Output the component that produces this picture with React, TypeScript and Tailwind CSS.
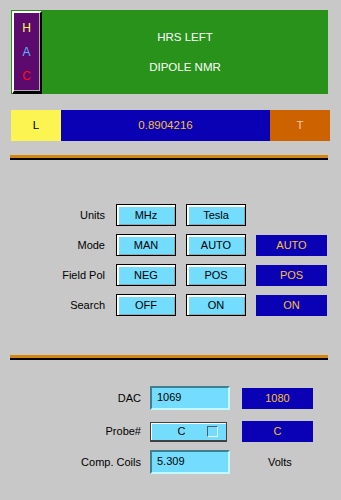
import React from 'react'

const font = { fontFamily: '"Liberation Sans", Arial, sans-serif' }

function Separator() {
  return (
    <div className="ml-[10px] w-[318px]">
      <div className="h-[3px] bg-[#d4850e]" />
      <div className="h-[2px] bg-black" />
    </div>
  )
}

function Btn({ label }: { label: string }) {
  return (
    <div className="w-[60px] h-[22px] border border-black bg-[#74dcfc] shadow-[inset_2px_2px_0_#ffffff,inset_-1px_-1px_0_#8aa8b0] flex items-center justify-center text-black">
      {label}
    </div>
  )
}

function Indicator({ value }: { value: string }) {
  return (
    <div className="w-[71px] h-[21px] bg-[#0a00b4] flex items-center justify-center text-[#f8c030]">
      {value}
    </div>
  )
}

function Input({ value }: { value: string }) {
  return (
    <div className="w-[80px] h-[24px] bg-[#74dcfc] border-t-2 border-l-2 border-t-[#3f7f8f] border-l-[#3f7f8f] border-b-2 border-r-2 border-b-[#c4f8ff] border-r-[#c4f8ff] pl-[5px] pt-[1px] text-black">
      {value}
    </div>
  )
}

export default function App() {
  const rows = [
    { label: 'Units', a: 'MHz', b: 'Tesla', ind: null },
    { label: 'Mode', a: 'MAN', b: 'AUTO', ind: 'AUTO' },
    { label: 'Field Pol', a: 'NEG', b: 'POS', ind: 'POS' },
    { label: 'Search', a: 'OFF', b: 'ON', ind: 'ON' },
  ]

  return (
    <div className="w-[341px] h-[500px] bg-[#c8c8c8] text-[11px] overflow-hidden" style={font}>
      {/* header */}
      <div className="mt-[10px] ml-[11px] w-[317px] h-[84px] bg-[#28921a] flex">
        <div className="mt-[1px] ml-[1px] w-[30px] h-[83px] border-t-2 border-l-2 border-white border-r-2 border-b-[3px] border-r-black border-b-black">
          <div className="h-full bg-[#5c0a6e] border-r border-b border-[#b0b0b0] flex flex-col items-center pt-[8px] gap-[10px] text-[12px]">
            <span className="h-[14px] leading-[14px] text-[#ffff50]">H</span>
            <span className="h-[14px] leading-[14px] text-[#5ab4ff]">A</span>
            <span className="h-[14px] leading-[14px] text-[#ff1010]">C</span>
          </div>
        </div>
        <div className="flex-1 flex flex-col items-center pt-[20px] gap-[16px] text-white text-[11.5px]">
          <span className="h-[14px] leading-[14px]">HRS LEFT</span>
          <span className="h-[14px] leading-[14px]">DIPOLE NMR</span>
        </div>
      </div>

      {/* field bar */}
      <div className="mt-[16px] ml-[11px] flex h-[31px] text-[11.5px]">
        <div className="w-[50px] bg-[#fcf450] flex items-center justify-center text-black">L</div>
        <div className="w-[209px] bg-[#0a00b4] flex items-center justify-center text-[#f8c030]">0.8904216</div>
        <div className="w-[60px] bg-[#cc6200] flex items-center justify-center text-[#f0c8a8]">T</div>
      </div>

      <div className="mt-[14px]">
        <Separator />
      </div>

      {/* controls */}
      <div className="mt-[44px] flex flex-col gap-[8px]">
        {rows.map((r) => (
          <div key={r.label} className="flex items-start h-[22px]">
            <div className="w-[105px] h-[22px] flex items-center justify-end text-black">{r.label}</div>
            <div className="ml-[11px]">
              <Btn label={r.a} />
            </div>
            <div className="ml-[10px]">
              <Btn label={r.b} />
            </div>
            {r.ind && (
              <div className="ml-[10px] mt-[1px]">
                <Indicator value={r.ind} />
              </div>
            )}
          </div>
        ))}
      </div>

      <div className="mt-[39px]">
        <Separator />
      </div>

      {/* DAC / probe */}
      <div className="mt-[26px] flex flex-col">
        <div className="flex items-center h-[24px]">
          <div className="w-[141px] text-right text-black pr-[0px]">DAC</div>
          <div className="ml-[9px]">
            <Input value="1069" />
          </div>
          <div className="ml-[12px]">
            <Indicator value="1080" />
          </div>
        </div>

        <div className="mt-[11px] flex items-center h-[21px]">
          <div className="w-[141px] text-right text-black">Probe#</div>
          <div className="ml-[9px] w-[77px] h-[20px] border border-[#404040] border-b-2 bg-[#74dcfc] shadow-[inset_1px_1px_0_#ffffff] flex items-center text-black relative">
            <span className="flex-1 text-center pr-[14px]">C</span>
            <span className="absolute right-[8px] top-[3px] w-[11px] h-[11px] border border-t-[#505a60] border-l-[#505a60] border-b-[#e8ffff] border-r-[#e8ffff]" />
          </div>
          <div className="ml-[15px]">
            <Indicator value="C" />
          </div>
        </div>

        <div className="mt-[8px] flex items-center h-[24px]">
          <div className="w-[141px] text-right text-black">Comp. Coils</div>
          <div className="ml-[9px]">
            <Input value="5.309" />
          </div>
          <div className="ml-[38px] text-black">Volts</div>
        </div>
      </div>
    </div>
  )
}
